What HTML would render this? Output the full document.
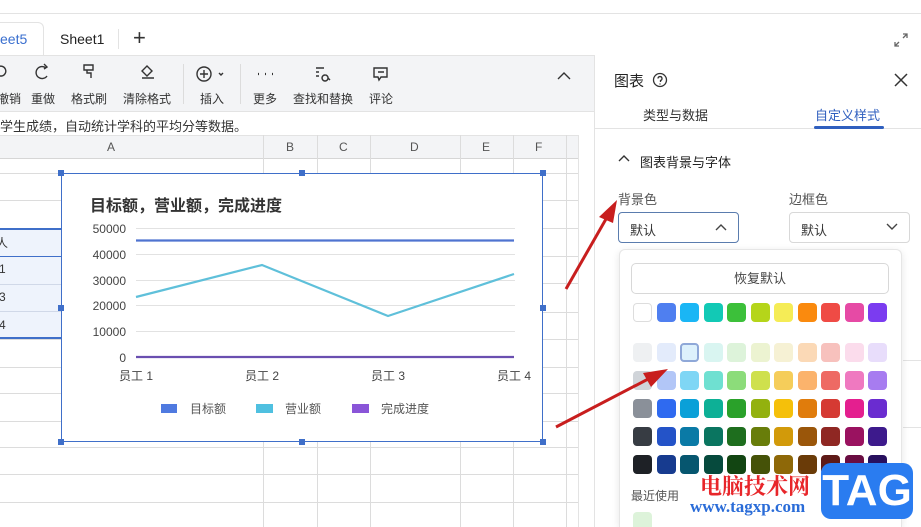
<!DOCTYPE html>
<html style="width:921px;height:527px;overflow:hidden"><head><meta charset="utf-8"><style>
*{margin:0;padding:0;box-sizing:border-box}
body{width:921px;height:527px;overflow:hidden;position:relative;background:#fff;font-family:"Liberation Sans","Noto Sans CJK SC",sans-serif;color:#333}
.a{position:absolute}
.t{font-size:12px;white-space:nowrap}
.sw{position:absolute;width:19px;height:19px;border-radius:4px}
</style></head><body>
<div class="a" style="left:0;top:13px;width:921px;height:1px;background:#e3e3e3"></div>
<div class="a" style="left:0;top:22px;width:44px;height:34px;background:#fff;border:1px solid #e3e3e3;border-left:none;border-bottom:none;border-radius:0 6px 0 0"></div>
<div class="a t" style="left:0;top:31px;font-size:14px;color:#3a6fcf">eet5</div>
<div class="a t" style="left:60px;top:31px;font-size:14px;color:#222">Sheet1</div>
<div class="a" style="left:118px;top:29px;width:1px;height:20px;background:#e3e3e3"></div>
<div class="a t" style="left:133px;top:25px;font-size:22px;color:#333">+</div>
<svg class="a" style="left:893px;top:32px" width="16" height="16" viewBox="0 0 16 16" fill="none" stroke="#666" stroke-width="1.3"><path d="M10 2h4v4M14 2l-4 4M6 14H2v-4M2 14l4-4"/></svg>
<div class="a" style="left:0;top:55px;width:594px;height:56px;background:#f3f4f6;border-top:1px solid #e3e3e3"></div>
<svg class="a" style="left:0;top:0" width="600" height="111" fill="none" stroke="#333" stroke-width="1.4">
<path d="M-2 67 a5 5 0 1 1 4 9 h-5"/>
<path d="M46 68 a6 6 0 1 0 1 8 M44 64l3 3-3 2"/>
<path d="M84 65h9v5h-9z M87 70v3h4v5"/>
<path d="M147 66l5 5-5 5-5-5z M142 78h12"/>
<circle cx="204" cy="74" r="7"/><path d="M204 70v8M200 74h8M219 73l2 2 2-2"/>
<path d="M258 74h1M265 74h1M272 74h1" stroke-width="2.2"/>
<path d="M316 68h8M316 72h3M316 76h3M325 75a3 3 0 1 0 .1 0M328 78l2 2"/>
<path d="M374 68h13v9h-6l-2 3-1-3h-4z M378 72h6"/>
<path d="M558 79l6-6 6 6"/>
</svg>
<div class="a" style="left:183px;top:64px;width:1px;height:40px;background:#dcdcdc"></div>
<div class="a" style="left:240px;top:64px;width:1px;height:40px;background:#dcdcdc"></div>
<div class="a t" style="left:-3px;top:90px">撤销</div>
<div class="a t" style="left:31px;top:90px">重做</div>
<div class="a t" style="left:71px;top:90px">格式刷</div>
<div class="a t" style="left:123px;top:90px">清除格式</div>
<div class="a t" style="left:200px;top:90px">插入</div>
<div class="a t" style="left:253px;top:90px">更多</div>
<div class="a t" style="left:293px;top:90px">查找和替换</div>
<div class="a t" style="left:369px;top:90px">评论</div>
<div class="a" style="left:0;top:111px;width:594px;height:1px;background:#e3e3e3"></div>
<div class="a t" style="left:0;top:116px;font-size:13px">学生成绩，自动统计学科的平均分等数据。</div>
<div class="a" style="left:0;top:135px;width:578px;height:24px;background:#f3f4f6;border-top:1px solid #e3e3e3;border-bottom:1px solid #d6d6d6"></div>
<div class="a" style="left:578px;top:135px;width:16px;height:392px;background:#fff;border-left:1px solid #e3e3e3"></div>
<svg class="a" style="left:0;top:135px" width="578" height="392">
<g stroke="#dcdcdc" stroke-width="1">
<path d="M263.5 0V392M317.5 0V392M370.5 0V392M460.5 0V392M513.5 0V392M566.5 0V392"/>
<path d="M0 38.5H578M0 65.5H578M0 93.5H578M0 121.5H578M0 148.5H578M0 177.5H578M0 204.5H578M0 232.5H578M0 258.5H578M0 286.5H578M0 312.5H578M0 339.5H578M0 367.5H578"/>
</g></svg>
<div class="a t" style="left:107px;top:140px;color:#555">A</div>
<div class="a t" style="left:286px;top:140px;color:#555">B</div>
<div class="a t" style="left:339px;top:140px;color:#555">C</div>
<div class="a t" style="left:410px;top:140px;color:#555">D</div>
<div class="a t" style="left:482px;top:140px;color:#555">E</div>
<div class="a t" style="left:535px;top:140px;color:#555">F</div>
<div class="a" style="left:0;top:228px;width:62px;height:111px;background:#eef3fc;border-top:2px solid #3f6fc9;border-bottom:2px solid #3f6fc9"></div>
<div class="a" style="left:0;top:256px;width:62px;height:1px;background:#3f6fc9"></div>
<div class="a" style="left:0;top:284px;width:62px;height:1px;background:#d0d8e8"></div>
<div class="a" style="left:0;top:311px;width:62px;height:1px;background:#d0d8e8"></div>
<div class="a t" style="left:-4px;top:234px">人</div>
<div class="a t" style="left:-1px;top:262px">1</div>
<div class="a t" style="left:-1px;top:290px">3</div>
<div class="a t" style="left:-1px;top:318px">4</div>
<div class="a" style="left:61px;top:173px;width:482px;height:269px;background:#fff;border:1px solid #3f6fc9"></div>
<div class="a" style="left:58px;top:170px;width:6px;height:6px;background:#3f6fc9"></div>
<div class="a" style="left:299px;top:170px;width:6px;height:6px;background:#3f6fc9"></div>
<div class="a" style="left:540px;top:170px;width:6px;height:6px;background:#3f6fc9"></div>
<div class="a" style="left:58px;top:305px;width:6px;height:6px;background:#3f6fc9"></div>
<div class="a" style="left:540px;top:305px;width:6px;height:6px;background:#3f6fc9"></div>
<div class="a" style="left:58px;top:439px;width:6px;height:6px;background:#3f6fc9"></div>
<div class="a" style="left:299px;top:439px;width:6px;height:6px;background:#3f6fc9"></div>
<div class="a" style="left:540px;top:439px;width:6px;height:6px;background:#3f6fc9"></div>
<div class="a t" style="left:90px;top:192px;font-size:16px;font-weight:bold;color:#333">目标额，营业额，完成进度</div>
<svg class="a" style="left:0;top:0" width="600" height="450">
<g stroke="#e2e2e2"><path d="M136 228.5H515M136 254.5H515M136 280.5H515M136 305.5H515M136 331.5H515"/></g>
<path d="M136 240.5H514" stroke="#4f73d0" stroke-width="2.2"/>
<path d="M136 297L262 265L388 316L514 274" stroke="#5fc0da" stroke-width="2.2" fill="none"/>
<path d="M136 357H514" stroke="#6a4fb0" stroke-width="2.2"/>
<g font-family="Liberation Sans,Noto Sans CJK SC,sans-serif" font-size="12" fill="#444" text-anchor="end">
<text x="126" y="233">50000</text><text x="126" y="259">40000</text><text x="126" y="285">30000</text><text x="126" y="310">20000</text><text x="126" y="336">10000</text><text x="126" y="362">0</text></g>
<g font-family="Liberation Sans,Noto Sans CJK SC,sans-serif" font-size="12" fill="#444" text-anchor="middle">
<text x="136" y="380">员工 1</text><text x="262" y="380">员工 2</text><text x="388" y="380">员工 3</text><text x="514" y="380">员工 4</text></g>
<rect x="161" y="404" width="16" height="9" fill="#4f7ae0"/>
<rect x="256" y="404" width="17" height="9" fill="#4fc0e0"/>
<rect x="352" y="404" width="17" height="9" fill="#8a55d8"/>
<g font-family="Liberation Sans,Noto Sans CJK SC,sans-serif" font-size="12" fill="#555">
<text x="190" y="413">目标额</text><text x="285" y="413">营业额</text><text x="381" y="413">完成进度</text></g>
</svg>
<div class="a" style="left:594px;top:55px;width:327px;height:472px;background:#fff;border-left:1px solid #e3e3e3"></div>
<div class="a t" style="left:614px;top:70px;font-size:15px;color:#222">图表</div>
<svg class="a" style="left:652px;top:72px" width="16" height="16" fill="none" stroke="#333" stroke-width="1.3"><circle cx="8" cy="8" r="6.5"/><path d="M6 6.5a2 2 0 1 1 2.5 2v1.5M8 11.5v1"/></svg>
<svg class="a" style="left:894px;top:73px" width="14" height="14" stroke="#333" stroke-width="1.5"><path d="M1 1l12 12M13 1L1 13"/></svg>
<div class="a t" style="left:643px;top:105px;font-size:13px;color:#333">类型与数据</div>
<div class="a t" style="left:815px;top:105px;font-size:13px;color:#2f5fbf">自定义样式</div>
<div class="a" style="left:595px;top:128px;width:326px;height:1px;background:#e3e3e3"></div>
<div class="a" style="left:814px;top:126px;width:70px;height:3px;background:#2f5fbf;border-radius:2px"></div>
<svg class="a" style="left:618px;top:154px" width="12" height="10" fill="none" stroke="#333" stroke-width="1.4"><path d="M1 7l5-5 5 5"/></svg>
<div class="a t" style="left:640px;top:152px;font-size:13px;color:#222">图表背景与字体</div>
<div class="a t" style="left:618px;top:189px;font-size:13px;color:#555">背景色</div>
<div class="a t" style="left:789px;top:189px;font-size:13px;color:#555">边框色</div>
<div class="a" style="left:618px;top:212px;width:121px;height:31px;border:1px solid #5a7cae;border-radius:4px"></div>
<div class="a t" style="left:630px;top:220px;font-size:13px;color:#333">默认</div>
<svg class="a" style="left:715px;top:223px" width="12" height="8" fill="none" stroke="#444" stroke-width="1.4"><path d="M1 7l5-5 5 5"/></svg>
<div class="a" style="left:789px;top:212px;width:121px;height:31px;border:1px solid #d8d8d8;border-radius:4px"></div>
<div class="a t" style="left:801px;top:220px;font-size:13px;color:#333">默认</div>
<svg class="a" style="left:886px;top:223px" width="12" height="8" fill="none" stroke="#444" stroke-width="1.4"><path d="M1 1l5 5 5-5"/></svg>
<div class="a" style="left:903px;top:360px;width:18px;height:1px;background:#e3e3e3"></div>
<div class="a" style="left:903px;top:427px;width:18px;height:1px;background:#e3e3e3"></div>
<div class="a" style="left:619px;top:249px;width:283px;height:278px;background:#fff;border:1px solid #e6e6e6;border-bottom:none;border-radius:6px 6px 0 0;box-shadow:0 2px 8px rgba(0,0,0,.1)"></div>
<div class="a" style="left:631px;top:263px;width:258px;height:31px;border:1px solid #d8d8d8;border-radius:5px;text-align:center;line-height:29px;font-size:13px;color:#444">恢复默认</div>
<div id="sw"></div>
<div class="a t" style="left:631px;top:487px;color:#555">最近使用</div>
<div class="sw" style="left:633px;top:512px;background:#ddf3da"></div>
<script>
var rows=[[303,["#fff","#4f7ff0","#1ab6f5","#12c9b5","#3cc03a","#b5d51a","#f5ec56","#fa8a0e","#ef4b45","#e64aa5","#7b3cf0"]],
[343,["#eef0f2","#e3ebfb","#ddf1fc","#d9f5f1","#ddf3da","#ecf3d1","#f6f1d4","#fbd9b6","#f7c1bd","#fbdcec","#e8ddfb"]],
[371,["#d0d4d9","#b2c6f7","#7fd6f5","#6fe0d1","#8cdc7a","#cfe04d","#f5cd5a","#fbb36c","#ee6a64","#ef79c0","#a77cf0"]],
[399,["#8a9099","#2f6af0","#0aa0d8","#0db096","#2aa12a","#93b10e","#f5c00a","#e07c0c","#d53a33","#e41f8f","#6a2cd0"]],
[427,["#373c43","#2453c8","#0a7aa6","#0a7560","#1e6e1e","#687d0a","#d29a0a","#9a560a","#8f2723","#9a1260","#3d1a8c"]],
[455,["#1e2126","#173b8f","#06566f","#064a3d","#124512","#455208","#8e6808","#6a3b08","#5e1a17","#6a0d42","#28105e"]]];
var h="";rows.forEach(function(r){r[1].forEach(function(c,i){var x=633+i*23.5;var b=(r[0]==303&&i==0)?"border:1px solid #ddd;":"";if(r[0]==343&&i==2)b="border:2px solid #8fa8d8;";h+='<div class="sw" style="left:'+x+'px;top:'+r[0]+'px;background:'+c+';'+b+'"></div>';});});
document.getElementById("sw").innerHTML=h;
</script>
<div class="a t" style="left:700px;top:470px;font-size:22px;font-weight:bold;color:#e8262a;font-family:'Noto Serif CJK SC','Noto Sans CJK SC',serif">电脑技术网</div>
<div class="a t" style="left:690px;top:497px;font-size:17px;font-weight:bold;color:#2a6cd8;font-family:'Liberation Serif',serif">www.tagxp.com</div>
<div class="a" style="left:821px;top:463px;width:92px;height:56px;background:#2a7cf0;border-radius:10px;color:#fff;font-size:44px;font-weight:bold;text-align:center;line-height:56px;font-family:'Liberation Sans',sans-serif">TAG</div>
<svg class="a" style="left:0;top:0" width="921" height="527">
<path d="M566 289L610 212" stroke="#c81e1e" stroke-width="3"/>
<path d="M617 200L599 217L613 223Z" fill="#c81e1e"/>
<path d="M556 427L654 376" stroke="#c81e1e" stroke-width="3"/>
<path d="M668 369L643 373L651 387Z" fill="#c81e1e"/>
</svg>
</body></html>
